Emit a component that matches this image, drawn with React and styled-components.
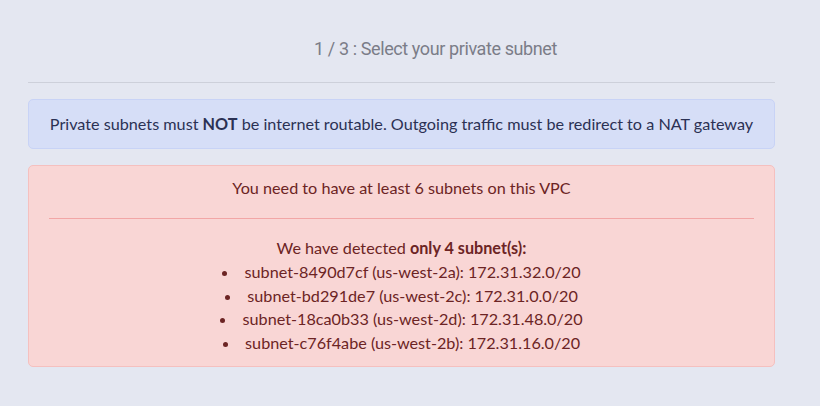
import React from 'react'
import styled, { createGlobalStyle } from 'styled-components'

const subnets = [
  { id: 'subnet-8490d7cf', zone: 'us-west-2a', cidr: '172.31.32.0/20' },
  { id: 'subnet-bd291de7', zone: 'us-west-2c', cidr: '172.31.0.0/20' },
  { id: 'subnet-18ca0b33', zone: 'us-west-2d', cidr: '172.31.48.0/20' },
  { id: 'subnet-c76f4abe', zone: 'us-west-2b', cidr: '172.31.16.0/20' },
]

const App = () => {
  return (
    <Page>
      <GlobalStyle />
      <Title>1 / 3 : Select your private subnet</Title>
      <Rule />
      <Alert $kind="info">
        Private subnets must <b>NOT</b> be internet routable. Outgoing traffic must be redirect to a NAT gateway
      </Alert>
      <Alert $kind="danger">
        <p>You need to have at least 6 subnets on this VPC</p>
        <Divider />
        <p>We have detected <b>only 4 subnet(s):</b></p>
        <SubnetList>
          {subnets.map(s => (
            <li key={s.id}>{s.id} ({s.zone}): {s.cidr}</li>
          ))}
        </SubnetList>
      </Alert>
    </Page>
  )
}

const GlobalStyle = createGlobalStyle`
  body {
    margin: 0;
    background-color: #e4e7f1;
    font-family: "Lato", "Open Sans", sans-serif;
  }
`

const Page = styled.div`
  width: 747px;
  padding: 37px 0 30px 28px;
  display: flex;
  flex-direction: column;
`

const Title = styled.h1`
  margin: 0;
  padding-left: 68px;
  text-align: center;
  font-family: "Roboto", sans-serif;
  font-weight: 400;
  font-size: 18px;
  letter-spacing: -0.4px;
  line-height: 24px;
  color: #7b7d88;
`

const Rule = styled.hr`
  margin: 21px 0 16px;
  border: 0;
  border-top: 1px solid #cdd0da;
`

const Alert = styled.div`
  border-radius: 5px;
  border: 1px solid ${p => (p.$kind === 'info' ? '#c8d3f6' : '#f5c0bf')};
  background-color: ${p => (p.$kind === 'info' ? '#d6def7' : '#f9d6d5')};
  color: ${p => (p.$kind === 'info' ? '#2b3154' : '#6c2424')};
  font-size: 16.2px;
  line-height: 24px;
  text-align: center;
  padding: ${p => (p.$kind === 'info' ? '12px 20px' : '10px 20px 11px')};
  margin-bottom: 16px;
  p {
    margin: 0;
  }
  b {
    font-weight: 700;
  }
`

const Divider = styled.hr`
  margin: 18px 0 17px;
  border: 0;
  border-top: 1px solid #f2a6a6;
`

const SubnetList = styled.ul`
  margin: 0;
  padding: 0;
  list-style: disc inside;
  li {
    line-height: 23.7px;
  }
`

export default App
